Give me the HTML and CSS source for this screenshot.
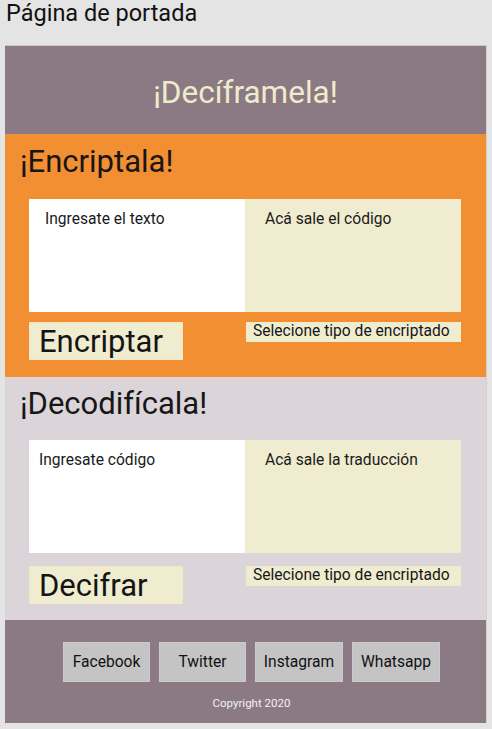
FILE: index.html
```html
<!DOCTYPE html>
<html lang="es">
<head>
<meta charset="utf-8">
<title>Página de portada</title>
<link rel="stylesheet" href="styles.css">
</head>
<body>
<h1 class="page-title">Página de portada</h1>
<main class="container">
  <header class="banner">¡Decíframela!</header>
  <section class="panel panel--encrypt">
    <h2 class="panel-title">¡Encriptala!</h2>
    <div class="boxes">
      <div class="box box--input">Ingresate el texto</div>
      <div class="box box--output">Acá sale el código</div>
    </div>
    <div class="actions">
      <div class="action-btn">Encriptar</div>
      <div class="select">Selecione tipo de encriptado</div>
    </div>
  </section>
  <section class="panel panel--decode">
    <h2 class="panel-title">¡Decodifícala!</h2>
    <div class="boxes">
      <div class="box box--input box--narrow">Ingresate código</div>
      <div class="box box--output">Acá sale la traducción</div>
    </div>
    <div class="actions">
      <div class="action-btn">Decifrar</div>
      <div class="select">Selecione tipo de encriptado</div>
    </div>
  </section>
  <footer class="footer">
    <nav class="social">
      <a class="social-btn">Facebook</a>
      <a class="social-btn">Twitter</a>
      <a class="social-btn">Instagram</a>
      <a class="social-btn">Whatsapp</a>
    </nav>
    <p class="copyright">Copyright 2020</p>
  </footer>
</main>
</body>
</html>
```

FILE: styles.css
```css
* { box-sizing: border-box; }
html, body { margin: 0; padding: 0; }
body {
  background: #e4e4e4;
  font-family: Roboto, "Noto Sans", sans-serif;
  color: #1a1a1a;
  width: 492px;
}
.page-title {
  margin: 0;
  height: 45px;
  padding: 0 0 0 6px;
  font-size: 23.5px;
  font-weight: 400;
  line-height: 27px;
  color: #111;
}
.container {
  margin: 0 5px 0 5px;
  width: 482px;
  border-top: 1px solid #c9c6c8;
  border-right: 1px solid #d2d0d1;
}
.banner {
  height: 88px;
  background: #8b7a83;
  color: #f0ebcd;
  font-size: 31.5px;
  display: flex;
  align-items: center;
  justify-content: center;
  padding-top: 4px;
}
.panel {
  display: flex;
  flex-direction: column;
  padding-left: 15px;
}
.panel--encrypt {
  background: #f28f33;
  height: 243px;
  padding-top: 10px;
}
.panel--decode {
  background: #dbd5d9;
  height: 243px;
  padding-top: 9px;
}
.panel-title {
  margin: 0;
  font-size: 31px;
  font-weight: 400;
  line-height: 36px;
  height: 36px;
  color: #161616;
}
.boxes {
  display: flex;
  margin-left: 9px;
  margin-top: 19px;
  height: 113px;
}
.panel--decode .boxes { margin-top: 18px; }
.box {
  width: 216px;
  font-size: 15.6px;
  line-height: 18px;
  padding-top: 11px;
}
.box--input {
  background: #ffffff;
  padding-left: 16px;
}
.box--narrow { padding-left: 10px; }
.box--output {
  background: #f0ecd0;
  padding-left: 20px;
}
.actions {
  display: flex;
  align-items: flex-start;
  margin-left: 9px;
  margin-top: 10px;
}
.panel--decode .actions { margin-top: 13px; }
.action-btn {
  width: 154px;
  height: 38px;
  background: #f0ecd0;
  border: 1px solid #f3e6c6;
  font-size: 31px;
  line-height: 36px;
  padding-left: 9px;
  padding-top: 1px;
  color: #141414;
}
.select {
  margin-left: 63px;
  width: 215px;
  height: 20px;
  background: #f0ecd0;
  font-size: 15.6px;
  line-height: 19px;
  padding-left: 7px;
  color: #161616;
}
.footer {
  background: #8b7a83;
  height: 103px;
  padding-top: 22px;
  padding-left: 12px;
  display: flex;
  flex-direction: column;
  align-items: center;
}
.social {
  display: flex;
  gap: 9px;
}
.social-btn {
  width: 87px;
  height: 40px;
  background: #c4c4c4;
  border: 1px solid #cbcbcb;
  font-size: 15.6px;
  line-height: 38px;
  text-align: center;
  color: #111;
}
.social-btn:nth-child(n+3) { width: 88px; }
.copyright {
  margin: 14px 0 0 0;
  font-size: 11.5px;
  line-height: 14px;
  color: #f4f2f3;
}
```
